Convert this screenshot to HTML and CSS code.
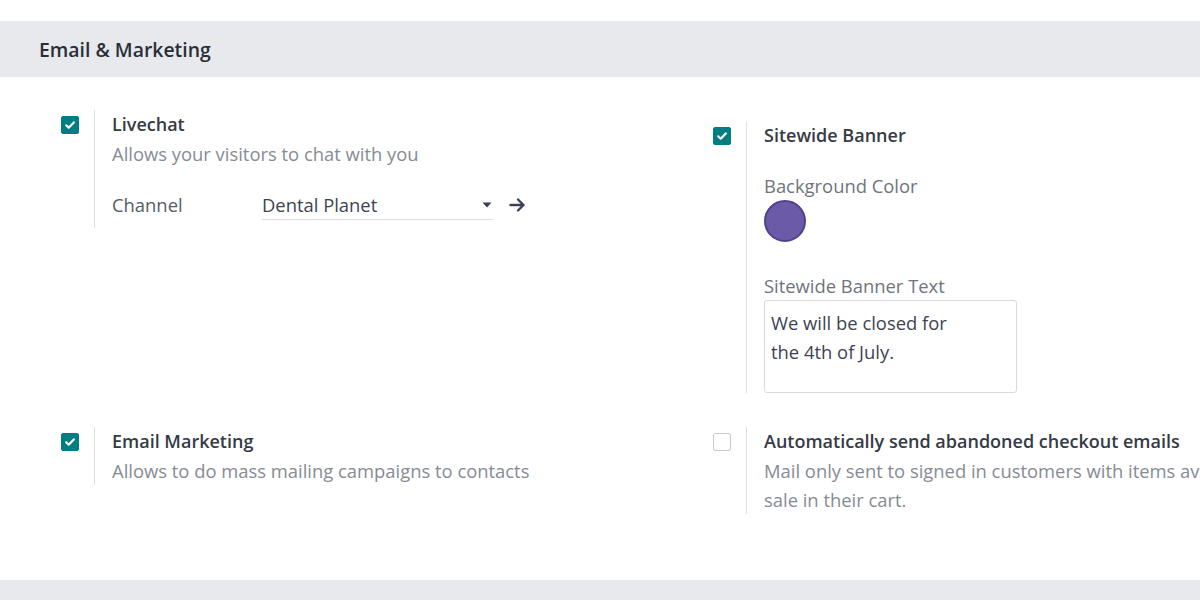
FILE: index.html
```html
<!DOCTYPE html>
<html lang="en">
<head>
<meta charset="utf-8">
<title>Email &amp; Marketing</title>
<link rel="stylesheet" href="styles.css">
</head>
<body>
<div class="page">
  <div class="section-head"><h2 class="section-title">Email &amp; Marketing</h2></div>
  <div class="settings">
    <div class="setting">
      <div class="check-pane"><span class="checkbox checked"><svg viewBox="0 0 18 18" width="18" height="18"><path d="M5.2 9.3 7.7 11.7 12.8 6.4" fill="none" stroke="#fff" stroke-width="2.2" stroke-linecap="round" stroke-linejoin="round"/></svg></span></div>
      <div class="text-pane">
        <div class="setting-title">Livechat</div>
        <div class="setting-desc">Allows your visitors to chat with you</div>
        <div class="field-row">
          <span class="field-label">Channel</span>
          <span class="select">Dental Planet<svg class="caret" viewBox="0 0 10 6" width="10" height="6"><path d="M0.5 0.5h9L5 5.5z" fill="#374151"/></svg></span>
          <svg class="arrow" viewBox="0 0 18 16" width="18" height="16"><path d="M1.5 8h13M9 2.5 14.5 8 9 13.5" fill="none" stroke="#3d4350" stroke-width="2.4" stroke-linecap="round" stroke-linejoin="round"/></svg>
        </div>
      </div>
    </div>
    <div class="setting offset">
      <div class="check-pane"><span class="checkbox checked"><svg viewBox="0 0 18 18" width="18" height="18"><path d="M5.2 9.3 7.7 11.7 12.8 6.4" fill="none" stroke="#fff" stroke-width="2.2" stroke-linecap="round" stroke-linejoin="round"/></svg></span></div>
      <div class="text-pane">
        <div class="setting-title">Sitewide Banner</div>
        <div class="sub-label first">Background Color</div>
        <div class="color-swatch"></div>
        <div class="sub-label second">Sitewide Banner Text</div>
        <div class="textarea">We will be closed for
the 4th of July.</div>
      </div>
    </div>
    <div class="setting">
      <div class="check-pane"><span class="checkbox checked"><svg viewBox="0 0 18 18" width="18" height="18"><path d="M5.2 9.3 7.7 11.7 12.8 6.4" fill="none" stroke="#fff" stroke-width="2.2" stroke-linecap="round" stroke-linejoin="round"/></svg></span></div>
      <div class="text-pane">
        <div class="setting-title">Email Marketing</div>
        <div class="setting-desc">Allows to do mass mailing campaigns to contacts</div>
      </div>
    </div>
    <div class="setting">
      <div class="check-pane"><span class="checkbox"></span></div>
      <div class="text-pane narrow">
        <div class="setting-title">Automatically send abandoned checkout emails</div>
        <div class="setting-desc">Mail only sent to signed in customers with items available for sale in their cart.</div>
      </div>
    </div>
  </div>
  <div class="section-head next"></div>
</div>
</body>
</html>
```
FILE: styles.css
```css
html, body {
  margin: 0;
  padding: 0;
  overflow: hidden;
  background: #fff;
}
body {
  font-family: "Open Sans", "Noto Sans", sans-serif;
  color: #374151;
  width: 1200px;
  height: 600px;
}
.page {
  padding-top: 21px;
  width: 1500px;
}
.section-head {
  background: #e7e9ed;
  height: 56px;
  display: flex;
  align-items: center;
  padding-left: 39px;
}
.section-title {
  margin: 0;
  font-size: 19.4px;
  font-weight: 600;
  color: #2a2e38;
}
.settings {
  display: grid;
  grid-template-columns: 652px 652px;
  row-gap: 34px;
  padding: 33px 0 66px 61px;
  align-items: start;
}
.setting {
  display: flex;
  align-items: stretch;
}
.setting.offset {
  margin-top: 11px;
}
.check-pane {
  width: 33px;
  flex: none;
}
.checkbox {
  display: block;
  width: 18px;
  height: 18px;
  margin-top: 6px;
  box-sizing: border-box;
  border: 1px solid #c9ccd1;
  border-radius: 2px;
  background: #fff;
}
.checkbox.checked {
  background: #017e84;
  border-color: #017e84;
}
.checkbox svg {
  display: block;
  margin: -1px;
}
.text-pane {
  border-left: 1px solid #dcdfe3;
  padding-left: 17px;
  font-size: 18.4px;
  line-height: 29px;
}
.text-pane.narrow {
  width: 550px;
}
.setting-title {
  font-size: 18px;
  font-weight: 600;
  color: #353a45;
}
.setting-desc {
  color: #868b94;
}
.field-row {
  display: flex;
  align-items: center;
  margin-top: 20px;
  padding-bottom: 8px;
}
.field-label {
  width: 150px;
  color: #555b66;
}
.select {
  width: 231px;
  height: 32px;
  border-bottom: 1px solid #d9dce0;
  display: flex;
  align-items: center;
  justify-content: space-between;
  color: #3d4350;
  padding-top: 2px;
  box-sizing: border-box;
}
.caret {
  margin-right: 1px;
}
.arrow {
  margin-left: 16px;
  margin-top: 1px;
}
.sub-label {
  color: #6f747d;
}
.sub-label.first {
  margin-top: 21px;
}
.sub-label.second {
  margin-top: 29px;
}
.color-swatch {
  width: 42px;
  height: 42px;
  border-radius: 50%;
  box-sizing: border-box;
  background: #6a5aa8;
  border: 2px solid #4f4288;
}
.textarea {
  width: 253px;
  height: 93px;
  box-sizing: border-box;
  border: 1px solid #d6d9dd;
  border-radius: 3px;
  padding: 7px 6px;
  white-space: pre-line;
  color: #3d4350;
  line-height: 29px;
}
.section-head.next {
  height: 40px;
}
```
